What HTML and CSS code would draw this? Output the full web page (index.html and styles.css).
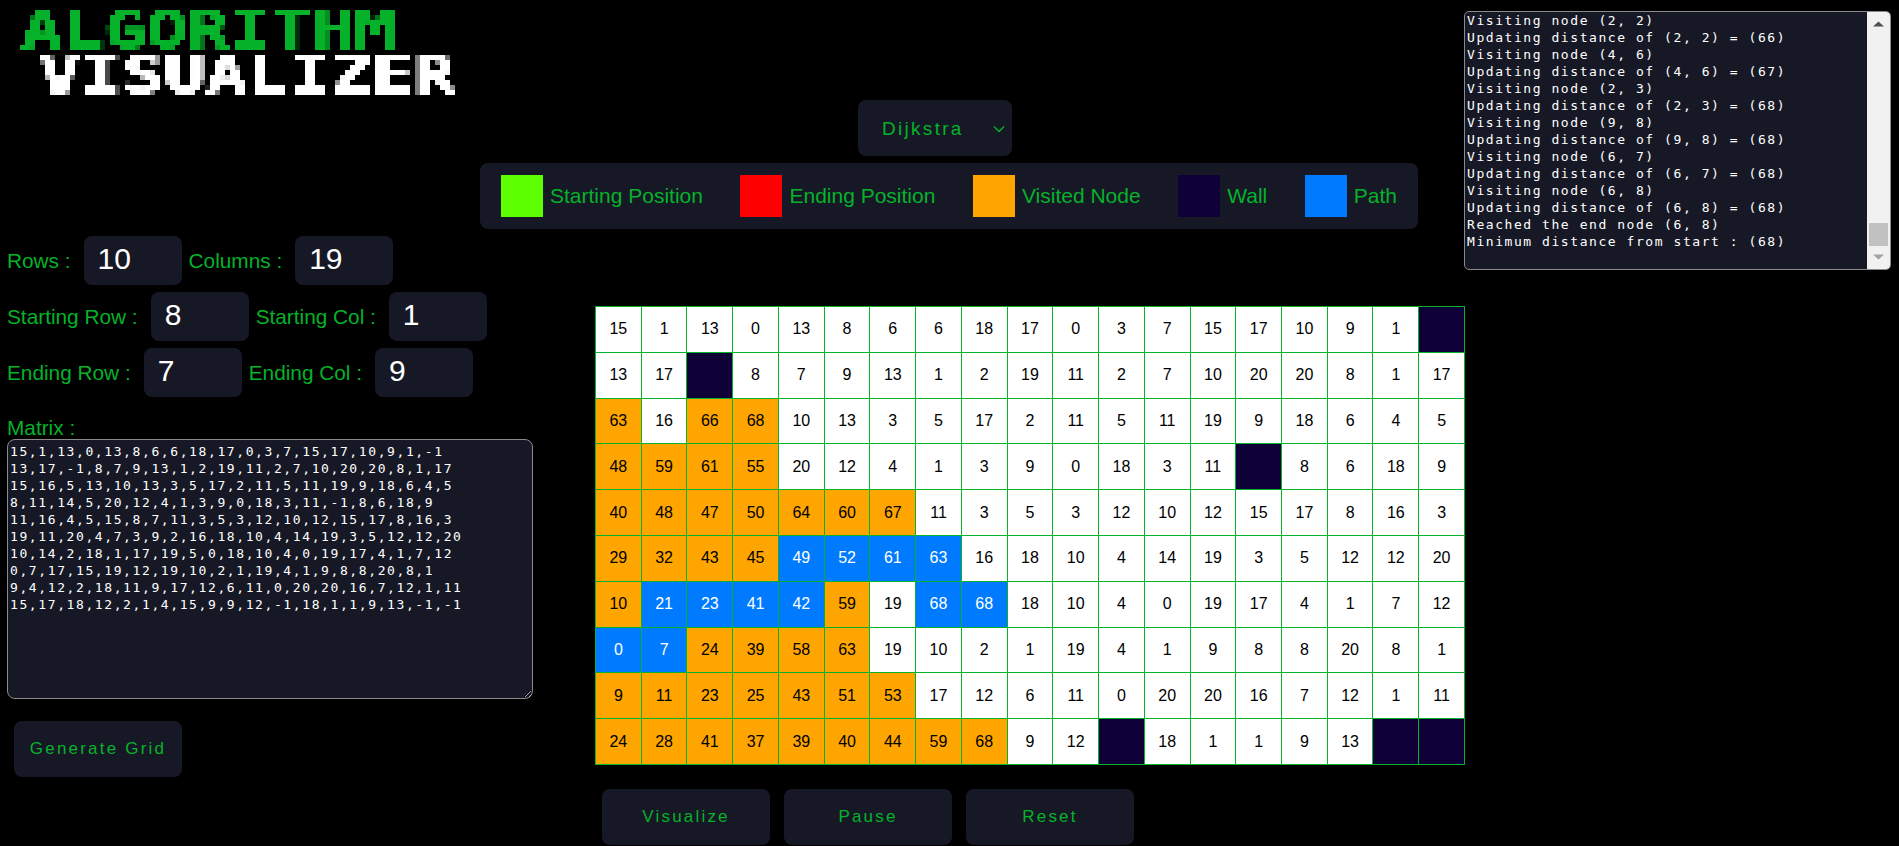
FILE: index.html
```html
<!DOCTYPE html>
<html lang="en">
<head>
    <meta charset="UTF-8">
    <meta name="viewport" content="width=device-width, initial-scale=1.0">
    <title>Algorithm Visualizer</title>
    <link rel="stylesheet" href="styles.css">
</head>
<body>
    <!-- Blocky look for the logo text -->
    <svg class="svg-defs" width="0" height="0">
        <filter id="pixelate" x="0" y="0" width="100%" height="100%" color-interpolation-filters="sRGB">
            <feFlood x="2" y="2" width="1" height="1"/>
            <feComposite width="5" height="5"/>
            <feTile result="dots"/>
            <feComposite in="SourceGraphic" in2="dots" operator="in"/>
            <feMorphology operator="dilate" radius="2"/>
        </filter>
    </svg>

    <div class="page">
        <!-- Logo, algorithm picker and legend -->
        <header class="top">
            <h1 class="logo">
                <span class="logo-first">ALGORITHM</span>
                <span class="logo-second">VISUALIZER</span>
            </h1>
            <div class="top-controls">
                <select class="algo-select">
                    <option>Dijkstra</option>
                    <option>BFS</option>
                    <option>DFS</option>
                </select>
                <ul class="legend">
                    <li class="legend-item"><span class="swatch swatch-start"></span>Starting Position</li>
                    <li class="legend-item"><span class="swatch swatch-end"></span>Ending Position</li>
                    <li class="legend-item"><span class="swatch swatch-visited"></span>Visited Node</li>
                    <li class="legend-item"><span class="swatch swatch-wall"></span>Wall</li>
                    <li class="legend-item"><span class="swatch swatch-path"></span>Path</li>
                </ul>
            </div>
        </header>

        <!-- Log output -->
        <aside class="log">
            <div class="log-text">Visiting node (2, 2)
Updating distance of (2, 2) = (66)
Visiting node (4, 6)
Updating distance of (4, 6) = (67)
Visiting node (2, 3)
Updating distance of (2, 3) = (68)
Visiting node (9, 8)
Updating distance of (9, 8) = (68)
Visiting node (6, 7)
Updating distance of (6, 7) = (68)
Visiting node (6, 8)
Updating distance of (6, 8) = (68)
Reached the end node (6, 8)
Minimum distance from start : (68)</div>
            <div class="log-scrollbar">
                <svg width="23" height="23" viewBox="0 0 23 23"><path d="M6 14.500 L11.500 9.500 L17 14.500 Z" fill="#505050"/></svg>
                <span class="log-thumb"></span>
                <svg width="23" height="23" viewBox="0 0 23 23"><path d="M6 8.500 L11.500 13.500 L17 8.500 Z" fill="#a3a3a3"/></svg>
            </div>
        </aside>

        <!-- Grid settings -->
        <form class="settings">
            <div class="field-row">
                <label class="field-label" for="rows">Rows :</label>
                <input class="num-input" type="text" id="rows" value="10">
                <label class="field-label" for="cols">Columns :</label>
                <input class="num-input" type="text" id="cols" value="19">
            </div>
            <div class="field-row">
                <label class="field-label" for="startRow">Starting Row :</label>
                <input class="num-input" type="text" id="startRow" value="8">
                <label class="field-label" for="startCol">Starting Col :</label>
                <input class="num-input" type="text" id="startCol" value="1">
            </div>
            <div class="field-row">
                <label class="field-label" for="endRow">Ending Row :</label>
                <input class="num-input" type="text" id="endRow" value="7">
                <label class="field-label" for="endCol">Ending Col :</label>
                <input class="num-input" type="text" id="endCol" value="9">
            </div>
            <label class="matrix-label" for="matrix">Matrix :</label>
            <textarea class="matrix" id="matrix" spellcheck="false">15,1,13,0,13,8,6,6,18,17,0,3,7,15,17,10,9,1,-1
13,17,-1,8,7,9,13,1,2,19,11,2,7,10,20,20,8,1,17
15,16,5,13,10,13,3,5,17,2,11,5,11,19,9,18,6,4,5
8,11,14,5,20,12,4,1,3,9,0,18,3,11,-1,8,6,18,9
11,16,4,5,15,8,7,11,3,5,3,12,10,12,15,17,8,16,3
19,11,20,4,7,3,9,2,16,18,10,4,14,19,3,5,12,12,20
10,14,2,18,1,17,19,5,0,18,10,4,0,19,17,4,1,7,12
0,7,17,15,19,12,19,10,2,1,19,4,1,9,8,8,20,8,1
9,4,12,2,18,11,9,17,12,6,11,0,20,20,16,7,12,1,11
15,17,18,12,2,1,4,15,9,9,12,-1,18,1,1,9,13,-1,-1</textarea>
            <button class="btn btn-generate" type="button">Generate Grid</button>
        </form>

        <!-- Grid and run controls -->
        <main class="board">
            <table class="grid">
                <tr><td>15</td><td>1</td><td>13</td><td>0</td><td>13</td><td>8</td><td>6</td><td>6</td><td>18</td><td>17</td><td>0</td><td>3</td><td>7</td><td>15</td><td>17</td><td>10</td><td>9</td><td>1</td><td class="wall"></td></tr>
                <tr><td>13</td><td>17</td><td class="wall"></td><td>8</td><td>7</td><td>9</td><td>13</td><td>1</td><td>2</td><td>19</td><td>11</td><td>2</td><td>7</td><td>10</td><td>20</td><td>20</td><td>8</td><td>1</td><td>17</td></tr>
                <tr><td class="visited">63</td><td>16</td><td class="visited">66</td><td class="visited">68</td><td>10</td><td>13</td><td>3</td><td>5</td><td>17</td><td>2</td><td>11</td><td>5</td><td>11</td><td>19</td><td>9</td><td>18</td><td>6</td><td>4</td><td>5</td></tr>
                <tr><td class="visited">48</td><td class="visited">59</td><td class="visited">61</td><td class="visited">55</td><td>20</td><td>12</td><td>4</td><td>1</td><td>3</td><td>9</td><td>0</td><td>18</td><td>3</td><td>11</td><td class="wall"></td><td>8</td><td>6</td><td>18</td><td>9</td></tr>
                <tr><td class="visited">40</td><td class="visited">48</td><td class="visited">47</td><td class="visited">50</td><td class="visited">64</td><td class="visited">60</td><td class="visited">67</td><td>11</td><td>3</td><td>5</td><td>3</td><td>12</td><td>10</td><td>12</td><td>15</td><td>17</td><td>8</td><td>16</td><td>3</td></tr>
                <tr><td class="visited">29</td><td class="visited">32</td><td class="visited">43</td><td class="visited">45</td><td class="path">49</td><td class="path">52</td><td class="path">61</td><td class="path">63</td><td>16</td><td>18</td><td>10</td><td>4</td><td>14</td><td>19</td><td>3</td><td>5</td><td>12</td><td>12</td><td>20</td></tr>
                <tr><td class="visited">10</td><td class="path">21</td><td class="path">23</td><td class="path">41</td><td class="path">42</td><td class="visited">59</td><td>19</td><td class="path">68</td><td class="path">68</td><td>18</td><td>10</td><td>4</td><td>0</td><td>19</td><td>17</td><td>4</td><td>1</td><td>7</td><td>12</td></tr>
                <tr><td class="path">0</td><td class="path">7</td><td class="visited">24</td><td class="visited">39</td><td class="visited">58</td><td class="visited">63</td><td>19</td><td>10</td><td>2</td><td>1</td><td>19</td><td>4</td><td>1</td><td>9</td><td>8</td><td>8</td><td>20</td><td>8</td><td>1</td></tr>
                <tr><td class="visited">9</td><td class="visited">11</td><td class="visited">23</td><td class="visited">25</td><td class="visited">43</td><td class="visited">51</td><td class="visited">53</td><td>17</td><td>12</td><td>6</td><td>11</td><td>0</td><td>20</td><td>20</td><td>16</td><td>7</td><td>12</td><td>1</td><td>11</td></tr>
                <tr><td class="visited">24</td><td class="visited">28</td><td class="visited">41</td><td class="visited">37</td><td class="visited">39</td><td class="visited">40</td><td class="visited">44</td><td class="visited">59</td><td class="visited">68</td><td>9</td><td>12</td><td class="wall"></td><td>18</td><td>1</td><td>1</td><td>9</td><td>13</td><td class="wall"></td><td class="wall"></td></tr>
            </table>
            <div class="run-buttons">
                <button class="btn" type="button">Visualize</button>
                <button class="btn" type="button">Pause</button>
                <button class="btn" type="button">Reset</button>
            </div>
        </main>
    </div>
</body>
</html>
```

FILE: styles.css
```css
/* Resetting some default styles */
* {
    margin: 0;
    padding: 0;
    box-sizing: border-box;
}

body {
    font-family: "Liberation Sans", Arial, sans-serif;
    background-color: #000;
    color: #05b22a;
    overflow: hidden;
}

.svg-defs {
    display: block;
}

.page {
    display: grid;
    grid-template-columns: 595px 870px 1fr;
    grid-template-rows: 236px auto;
    height: 846px;
}

/* Header */
.top {
    grid-column: 1 / 3;
    display: flex;
}

.logo {
    width: 480px;
    height: 110px;
    padding: 8px 0 0 21px;
    font-family: "DejaVu Sans Mono", monospace;
    font-size: 52px;
    line-height: 45px;
    font-weight: bold;
    -webkit-text-stroke: 1px currentColor;
    filter: url(#pixelate);
}

.logo span {
    display: block;
    white-space: nowrap;
    transform: scaleX(1.33);
    transform-origin: left center;
}

.logo-first {
    color: #05b22a;
}

.logo-second {
    color: #fff;
    margin-left: 18px;
}

.top-controls {
    padding-top: 100px;
    display: flex;
    flex-direction: column;
    gap: 7px;
}

.algo-select {
    appearance: none;
    width: 154px;
    height: 56px;
    margin-left: 378px;
    padding-left: 24px;
    background-color: #161925;
    background-image: url("data:image/svg+xml,%3Csvg xmlns='http://www.w3.org/2000/svg' width='14' height='8' viewBox='0 0 14 8'%3E%3Cpath d='M2 1.500 L7 6.500 L12 1.500' fill='none' stroke='%2305b22a' stroke-width='1.500'/%3E%3C/svg%3E");
    background-repeat: no-repeat;
    background-position: 134px 25px;
    color: #05b22a;
    border: none;
    border-radius: 8px;
    font-family: inherit;
    font-size: 19px;
    letter-spacing: 2.3px;
}

.legend {
    list-style: none;
    width: 938px;
    height: 66px;
    padding: 0 21px;
    background-color: #161925;
    border-radius: 8px;
    display: flex;
    justify-content: space-between;
    align-items: center;
    font-size: 21px;
}

.legend-item {
    display: flex;
    align-items: center;
    gap: 7px;
    padding-bottom: 1px;
}

.swatch {
    width: 42px;
    height: 42px;
}

.swatch-start { background-color: #5cff00; }
.swatch-end { background-color: #ff0000; }
.swatch-visited { background-color: #ffa500; }
.swatch-wall { background-color: #0f0038; }
.swatch-path { background-color: #007bff; }

/* Log */
.log {
    grid-column: 3;
    grid-row: 1 / 3;
    align-self: start;
    display: flex;
    width: 427px;
    height: 259px;
    margin: 11px 0 0 -1px;
    background-color: #161925;
    border: 1px solid #8a8a8a;
    border-radius: 5px;
    overflow: hidden;
}

.log-text {
    flex: 1;
    padding: 0 2px;
    color: #fff;
    font-family: "DejaVu Sans Mono", monospace;
    font-size: 13px;
    line-height: 17px;
    letter-spacing: 1.56px;
    white-space: pre;
    overflow: hidden;
}

.log-scrollbar {
    width: 23px;
    background-color: #f1f1f1;
    display: flex;
    flex-direction: column;
    justify-content: space-between;
}

.log-thumb {
    width: 19px;
    height: 23px;
    margin: auto 2px 0;
    background-color: #c1c1c1;
}

/* Settings form */
.settings {
    padding-left: 7px;
    display: flex;
    flex-direction: column;
    align-items: flex-start;
}

.field-row {
    display: flex;
    align-items: center;
    gap: 7px;
    height: 49px;
    margin-bottom: 7px;
    font-size: 20.8px;
}

.field-label {
    padding-right: 6px;
}

.num-input {
    width: 98px;
    height: 49px;
    padding: 0 14px 4px;
    background-color: #161925;
    color: #fff;
    border: none;
    border-radius: 8px;
    font-family: inherit;
    font-size: 30px;
}

.matrix-label {
    margin-top: 12px;
    font-size: 20.8px;
    line-height: 23px;
}

.matrix {
    width: 526px;
    height: 260px;
    padding: 3px 4px 2px 2px;
    background-color: #161925;
    color: #fff;
    border: 1px solid #8a8a8a;
    border-radius: 8px;
    font-family: "DejaVu Sans Mono", monospace;
    font-size: 13px;
    line-height: 17px;
    letter-spacing: 1.6px;
    white-space: pre;
}

.btn {
    width: 168px;
    height: 56px;
    background-color: #161925;
    color: #05b22a;
    border: none;
    border-radius: 8px;
    font-family: inherit;
    font-size: 17px;
    letter-spacing: 2.2px;
}

.btn-generate {
    margin: 22px 0 0 7px;
}

/* Grid */
.board {
    padding-top: 70px;
}

.grid {
    width: 870px;
    height: 459px;
    table-layout: fixed;
    border-collapse: collapse;
    background-color: #fff;
    color: #000;
    font-size: 16px;
}

.grid td {
    border: 1px solid #05b22a;
    text-align: center;
}

.grid .visited { background-color: #ffa500; }
.grid .path { background-color: #007bff; color: #fff; }
.grid .wall { background-color: #0f0038; }

.run-buttons {
    display: flex;
    gap: 14px;
    margin: 24px 0 0 7px;
}
```
